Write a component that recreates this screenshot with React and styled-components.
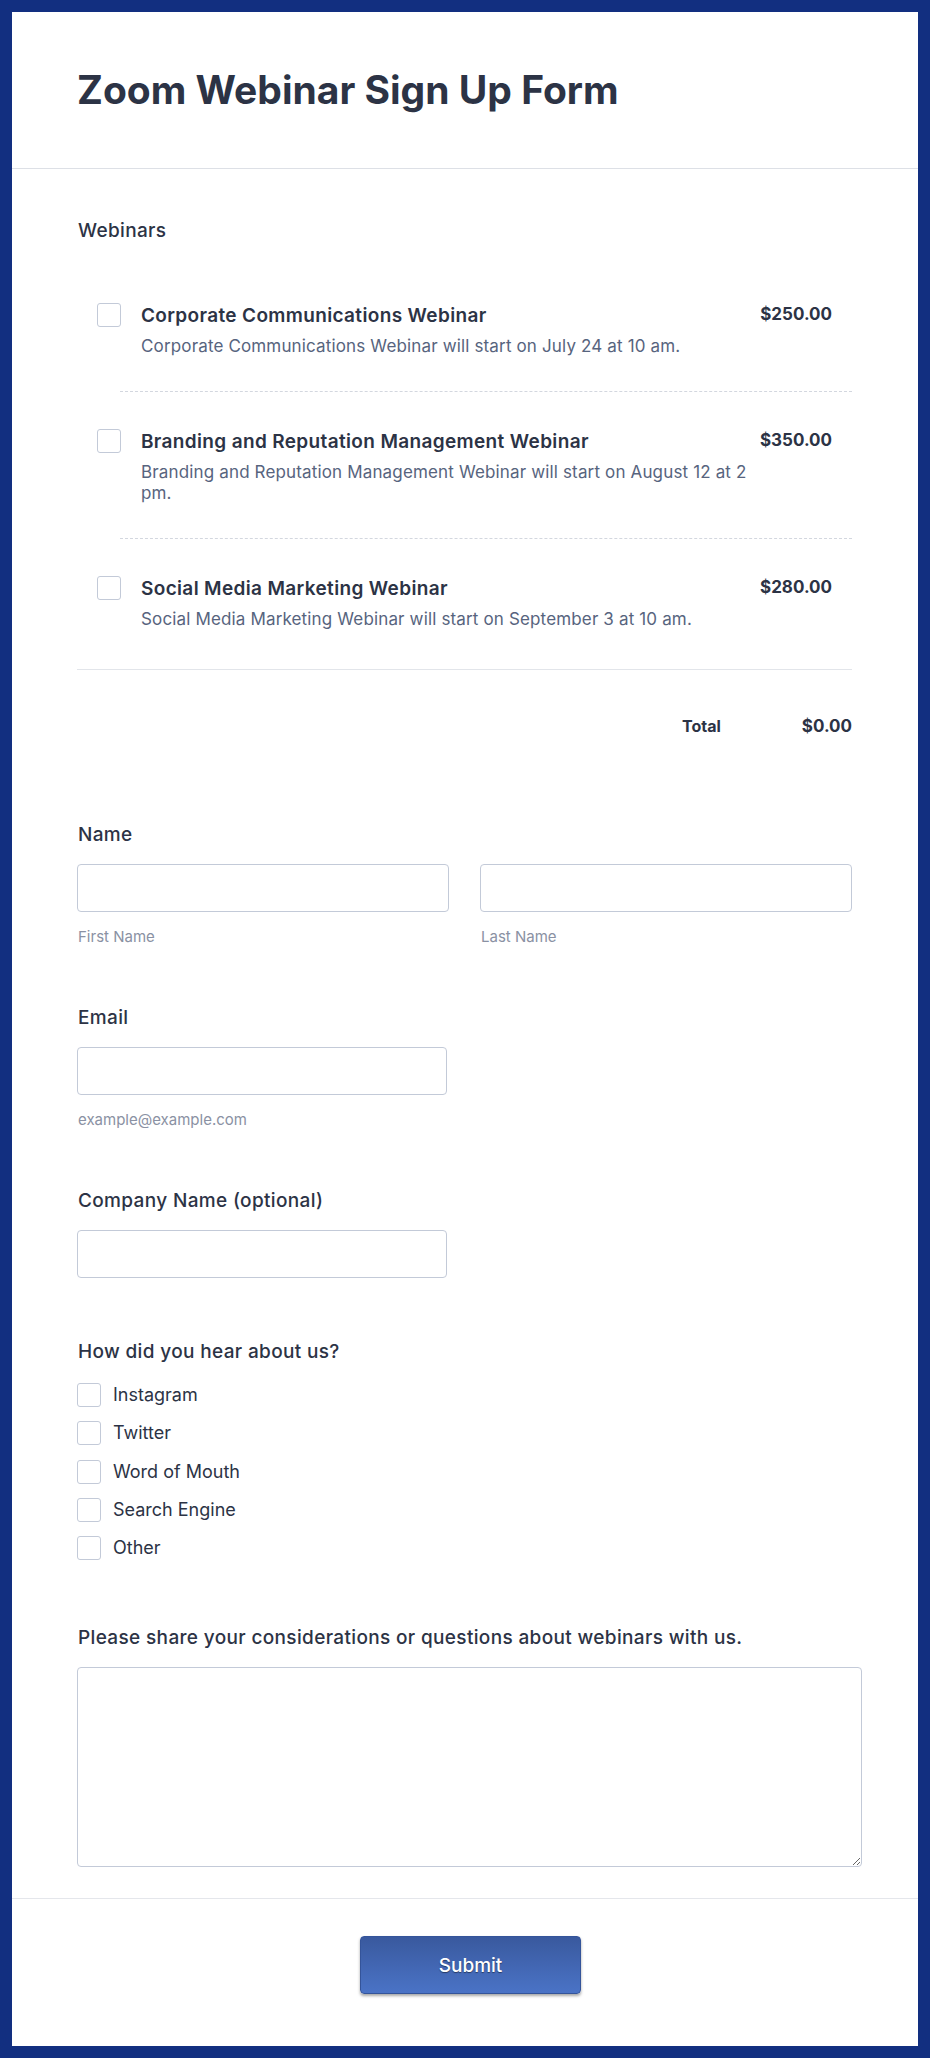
import React from 'react';
import styled, { createGlobalStyle } from 'styled-components';

const Global = createGlobalStyle`
  html, body { margin: 0; padding: 0; }
  body {
    background: #122f80;
    font-family: Inter, "Noto Sans", sans-serif;
    color: #2c3345;
  }
  * { box-sizing: border-box; }
`;

const Page = styled.div`
  padding: 12px;
`;

const Card = styled.form`
  background: #ffffff;
  display: flex;
  flex-direction: column;
`;

const Header = styled.header`
  padding: 56px 65px;
  border-bottom: 1px solid #dde0e6;
`;

const Title = styled.h1`
  margin: 0;
  font-size: 39px;
  line-height: 44px;
  font-weight: 700;
  color: #2c3345;
`;

const Body = styled.div`
  padding: 50px 66px 31px 65px;
  display: flex;
  flex-direction: column;
`;

const Field = styled.div`
  display: flex;
  flex-direction: column;
  margin-top: ${(p) => p.$space || 0}px;
`;

const Label = styled.div`
  padding-left: 1px;
  font-size: 19px;
  line-height: 24px;
  font-weight: 500;
  letter-spacing: 0.35px;
  color: #2c3345;
`;

const ProductList = styled.div`
  margin-top: 23px;
  padding-bottom: 5px;
  border-bottom: 1px solid #e2e5ea;
`;

const Product = styled.div`
  display: flex;
  align-items: flex-start;
  padding: 37px 20px 34px 20px;
`;

const Separator = styled.div`
  margin-left: 43px;
  border-top: 1px dashed #d3d7df;
`;

const Box = styled.span`
  flex: none;
  width: 24px;
  height: 24px;
  border: 1px solid #c3cad8;
  border-radius: 3px;
  background: #fff;
`;

const ProductText = styled.div`
  flex: 1;
  margin-left: 20px;
  min-width: 0;
`;

const ProductName = styled.div`
  font-size: 19px;
  line-height: 26px;
  font-weight: 600;
  letter-spacing: 0.35px;
  color: #2c3345;
`;

const ProductDesc = styled.div`
  margin-top: 7px;
  font-size: 17px;
  line-height: 21px;
  letter-spacing: 0.15px;
  color: #57647e;
`;

const Price = styled.div`
  flex: none;
  font-size: 17px;
  line-height: 22px;
  font-weight: 700;
  color: #2c3345;
`;

const TotalRow = styled.div`
  margin-top: 44px;
  display: flex;
  justify-content: flex-end;
  align-items: baseline;
  gap: 81px;
  line-height: 24px;
  color: #2c3345;
`;

const TotalLabel = styled.span`
  font-size: 16px;
  font-weight: 700;
`;

const TotalValue = styled.span`
  font-size: 17px;
  font-weight: 700;
`;

const InputRow = styled.div`
  margin-top: 17px;
  display: grid;
  grid-template-columns: 1fr 1fr;
  column-gap: 31px;
`;

const InputCol = styled.div`
  display: flex;
  flex-direction: column;
`;

const Input = styled.input`
  display: block;
  width: ${(p) => p.$width || '100%'};
  height: 48px;
  margin: ${(p) => (p.$top ? '17px 0 0' : '0')};
  padding: 0 12px;
  border: 1px solid #c3cad8;
  border-radius: 4px;
  background: #fff;
  font-family: inherit;
  font-size: 16px;
  color: #2c3345;
  outline: none;
`;

const SubLabel = styled.div`
  margin-top: 16px;
  padding-left: 1px;
  font-size: 15px;
  line-height: 18px;
  color: #8a91a3;
`;

const Options = styled.div`
  margin-top: 19px;
  display: flex;
  flex-direction: column;
  gap: 14.3px;
`;

const Option = styled.label`
  display: flex;
  align-items: flex-start;
  gap: 12px;
  font-size: 18px;
  line-height: 24px;
  color: #2c3345;
`;

const TextArea = styled.textarea`
  display: block;
  margin-top: 17px;
  width: 785px;
  height: 200px;
  border: 1px solid #c3cad8;
  border-radius: 4px;
  padding: 10px 12px;
  font-family: inherit;
  font-size: 16px;
  outline: none;
  background: #fff;
`;

const Footer = styled.div`
  border-top: 1px solid #e4e6eb;
  padding: 37px 0 52px 11px;
  display: flex;
  justify-content: center;
`;

const SubmitButton = styled.button`
  width: 221px;
  height: 58px;
  border: 1px solid #34549a;
  border-radius: 4px;
  background: linear-gradient(180deg, #39599e 0%, #4266b2 50%, #4a73c6 100%);
  box-shadow: 0 2px 3px rgba(0, 0, 0, 0.35);
  color: #ffffff;
  font-family: Inter, "Noto Sans", sans-serif;
  font-size: 19px;
  font-weight: 500;
  text-shadow: 0 1px 1px rgba(0, 0, 0, 0.45);
  cursor: pointer;
`;

const products = [
  {
    name: 'Corporate Communications Webinar',
    desc: 'Corporate Communications Webinar will start on July 24 at 10 am.',
    price: '$250.00',
  },
  {
    name: 'Branding and Reputation Management Webinar',
    desc: 'Branding and Reputation Management Webinar will start on August 12 at 2 pm.',
    price: '$350.00',
  },
  {
    name: 'Social Media Marketing Webinar',
    desc: 'Social Media Marketing Webinar will start on September 3 at 10 am.',
    price: '$280.00',
  },
];

const sources = ['Instagram', 'Twitter', 'Word of Mouth', 'Search Engine', 'Other'];

export default function App() {
  return (
    <>
      <Global />
      <Page>
        <Card onSubmit={(e) => e.preventDefault()}>
          <Header>
            <Title>Zoom Webinar Sign Up Form</Title>
          </Header>
          <Body>
            <Field>
              <Label>Webinars</Label>
              <ProductList>
                {products.map((p, i) => (
                  <React.Fragment key={p.name}>
                    {i > 0 && <Separator />}
                    <Product>
                      <Box />
                      <ProductText>
                        <ProductName>{p.name}</ProductName>
                        <ProductDesc>{p.desc}</ProductDesc>
                      </ProductText>
                      <Price>{p.price}</Price>
                    </Product>
                  </React.Fragment>
                ))}
              </ProductList>
              <TotalRow>
                <TotalLabel>Total</TotalLabel>
                <TotalValue>$0.00</TotalValue>
              </TotalRow>
            </Field>

            <Field $space={85}>
              <Label>Name</Label>
              <InputRow>
                <InputCol>
                  <Input type="text" />
                  <SubLabel>First Name</SubLabel>
                </InputCol>
                <InputCol>
                  <Input type="text" />
                  <SubLabel>Last Name</SubLabel>
                </InputCol>
              </InputRow>
            </Field>

            <Field $space={60}>
              <Label>Email</Label>
              <Input type="email" $top $width="370px" />
              <SubLabel>example@example.com</SubLabel>
            </Field>

            <Field $space={60}>
              <Label>Company Name (optional)</Label>
              <Input type="text" $top $width="370px" />
            </Field>

            <Field $space={62}>
              <Label>How did you hear about us?</Label>
              <Options>
                {sources.map((s) => (
                  <Option key={s}>
                    <Box />
                    {s}
                  </Option>
                ))}
              </Options>
            </Field>

            <Field $space={66}>
              <Label>Please share your considerations or questions about webinars with us.</Label>
              <TextArea />
            </Field>
          </Body>
          <Footer>
            <SubmitButton type="submit">Submit</SubmitButton>
          </Footer>
        </Card>
      </Page>
    </>
  );
}
